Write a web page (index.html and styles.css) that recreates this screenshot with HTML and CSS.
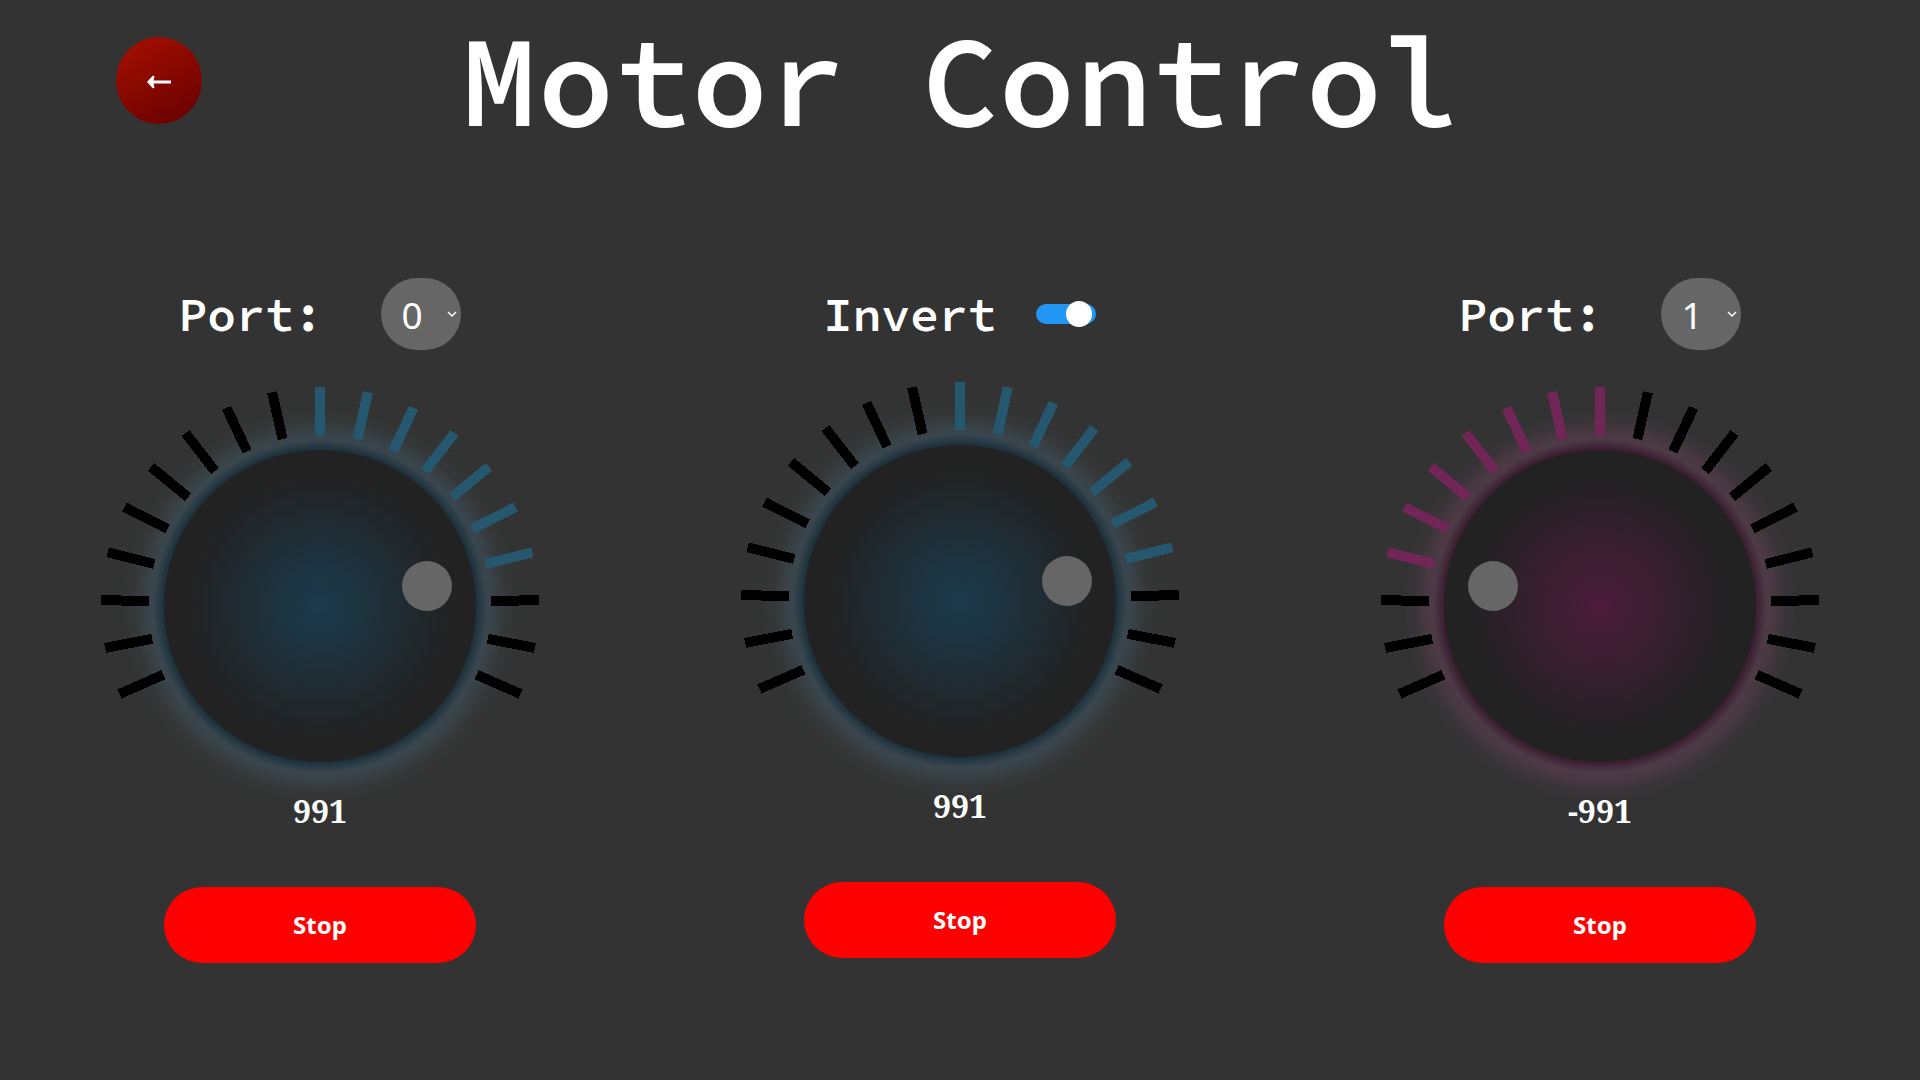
FILE: index.html
```html
<!DOCTYPE html>
<html lang="en">
<head>
<meta charset="utf-8">
<title>Motor Control</title>
<link rel="stylesheet" href="styles.css">
</head>
<body>
<svg class="defs" width="0" height="0" aria-hidden="true">
  <defs>
    <radialGradient id="face-blue" gradientUnits="userSpaceOnUse" cx="230" cy="230" r="132"><stop offset="0" stop-color="#1b3b4d"/><stop offset="1" stop-color="#222"/></radialGradient>
    <radialGradient id="face-pink" gradientUnits="userSpaceOnUse" cx="230" cy="230" r="132"><stop offset="0" stop-color="#4c1b3a"/><stop offset="1" stop-color="#222"/></radialGradient>
    <radialGradient id="glow-blue" gradientUnits="userSpaceOnUse" cx="230" cy="230" r="206">
      <stop offset=".757" stop-color="#1c303b"/><stop offset=".777" stop-color="#263943"/><stop offset=".81" stop-color="#3a464e"/><stop offset=".85" stop-color="#384146"/><stop offset=".9" stop-color="#353839"/><stop offset=".95" stop-color="#333434"/><stop offset="1" stop-color="#333"/>
    </radialGradient>
    <radialGradient id="glow-pink" gradientUnits="userSpaceOnUse" cx="230" cy="230" r="206">
      <stop offset=".757" stop-color="#3b1c30"/><stop offset=".777" stop-color="#412838"/><stop offset=".81" stop-color="#4e3a46"/><stop offset=".85" stop-color="#473841"/><stop offset=".9" stop-color="#3a3438"/><stop offset=".95" stop-color="#343334"/><stop offset="1" stop-color="#333"/>
    </radialGradient>
    <rect id="tick" x="225" y="11" width="10" height="48"/>
  </defs>
</svg>

<header class="header">
  <button class="back" aria-label="Back"><svg width="26" height="16" viewBox="0 0 26 16"><path d="M1 8L7 1.500L8.500 2.500L7.500 6.500H25V9.500H7.500L8.500 13.500L7 14.500Z" fill="#fff"/></svg></button>
  <h1 class="title">Motor Control</h1>
</header>

<main class="motors">
  <section class="motor">
    <div class="setting setting-port"><span class="label">Port:</span>
      <div class="select"><span>0</span><svg class="chevron" width="10" height="7" viewBox="0 0 10 7"><path d="M1 1L5 5L9 1"/></svg></div></div>
    <svg class="dial blue positive" width="460" height="440" viewBox="0 0 460 440"></svg>
    <output class="value">991</output>
    <button class="stop">Stop</button>
  </section>
  <section class="motor middle">
    <div class="setting setting-invert"><span class="label">Invert</span><span class="switch"><span class="thumb"></span></span></div>
    <svg class="dial blue positive" width="460" height="440" viewBox="0 0 460 440"></svg>
    <output class="value">991</output>
    <button class="stop">Stop</button>
  </section>
  <section class="motor">
    <div class="setting setting-port"><span class="label">Port:</span>
      <div class="select"><span>1</span><svg class="chevron" width="10" height="7" viewBox="0 0 10 7"><path d="M1 1L5 5L9 1"/></svg></div></div>
    <svg class="dial pink negative" width="460" height="440" viewBox="0 0 460 440"></svg>
    <output class="value">-991</output>
    <button class="stop">Stop</button>
  </section>
</main>
<script src="dial.js"></script>
</body>
</html>
```
FILE: styles.css
```css
* { box-sizing: border-box; }
body { margin: 0; height: 1080px; overflow: hidden; background: #333; color: #fff; font-family: "Noto Sans", sans-serif; }
button { border: 0; padding: 0; color: #fff; font-family: inherit; }
.defs { position: absolute; }

.header { display: grid; grid-template-columns: 116px 86px 1fr 202px; height: 278px; align-items: start; }
.back { grid-column: 2; display: flex; align-items: center; justify-content: center; width: 86px; height: 87px; margin-top: 37px; border-radius: 50%; background: linear-gradient(150deg, #a81000, #640000); }
.back svg { margin-top: 3px; }
.title { margin: 0; text-align: center; font: 650 128px "Source Code Pro", "Liberation Mono", monospace; }

.motors { display: grid; grid-template-columns: repeat(3, 640px); }
.motor { display: flex; flex-direction: column; align-items: center; }
.setting { display: flex; align-items: center; height: 72px; margin-bottom: 26px; }
.middle .setting { margin-bottom: 21px; }
.setting-port { gap: 58px; padding-right: 1px; }
.setting-invert { gap: 40px; }
.label { font: 600 48px "Source Code Pro", "Liberation Mono", monospace; }
.select { display: flex; align-items: center; justify-content: space-between; width: 80px; height: 72px; padding: 0 4px 0 21px; border-radius: 36px; background: #666; font-size: 37px; }
.chevron path { fill: none; stroke: #fff; stroke-width: 1.5; }
.switch { display: flex; align-items: center; justify-content: flex-end; width: 60px; height: 20px; padding-right: 4px; border-radius: 10px; background: #2196f3; }
.thumb { width: 26px; height: 26px; border-radius: 50%; background: #fff; }

.dial { display: block; }
.tick { fill: #000; shape-rendering: crispEdges; }
.blue .tick.on { fill: #25586f; }
.pink .tick.on { fill: #722657; }
.blue .glow { fill: url(#glow-blue); }
.pink .glow { fill: url(#glow-pink); }
.blue .face { fill: url(#face-blue); }
.pink .face { fill: url(#face-pink); }
.knob { fill: #666; }

.value { height: 44px; margin-top: -27px; line-height: 44px; font-family: "Noto Serif", serif; font-size: 32px; font-weight: 700; }
.stop { width: 312px; height: 76px; margin-top: 54px; padding-bottom: 2px; border-radius: 38px; background: #f00; font-size: 24px; font-weight: 700; }
```
FILE: dial.js
```javascript
// Builds each dial: glow, nineteen scale ticks, face and knob.
const NS = "http://www.w3.org/2000/svg";
const STEP = 240 / 19;

function add(parent, name, attrs) {
  const el = document.createElementNS(NS, name);
  for (const key in attrs) el.setAttribute(key, attrs[key]);
  parent.appendChild(el);
}

document.querySelectorAll(".dial").forEach((dial) => {
  const sign = dial.classList.contains("positive") ? 1 : -1;
  add(dial, "circle", { class: "glow", cx: 230, cy: 230, r: 206 });
  for (let i = -9; i <= 9; i++) {
    const on = i * sign >= 0 && i * sign <= 6;
    add(dial, "use", { href: "#tick", class: on ? "tick on" : "tick", transform: `rotate(${i * STEP} 230 230)` });
  }
  add(dial, "circle", { class: "face", cx: 230, cy: 230, r: 156 });
  add(dial, "circle", { class: "knob", cx: 230 + 107 * sign, cy: 210, r: 25 });
});
```
